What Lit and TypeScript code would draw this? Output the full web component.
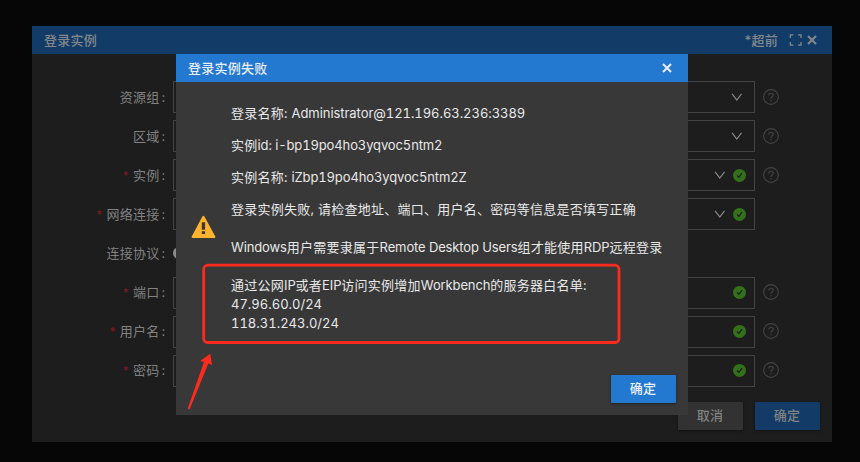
import { LitElement, html, css, svg, nothing } from "lit";
import { customElement } from "lit/decorators.js";

interface Field {
  label: string;
  required?: boolean;
  select?: boolean;
  valid?: boolean;
  help?: boolean;
  radio?: boolean;
  raised?: boolean;
}

const fields: Field[] = [
  { label: "资源组", select: true, help: true },
  { label: "区域", select: true, help: true },
  { label: "实例", required: true, select: true, valid: true, help: true },
  { label: "网络连接", required: true, select: true, valid: true },
  { label: "连接协议", radio: true },
  { label: "端口", required: true, valid: true, help: true, raised: true },
  { label: "用户名", required: true, valid: true, help: true, raised: true },
  { label: "密码", required: true, valid: true, help: true, raised: true },
];

const closeIcon = svg`<path d="M1.7 1.7 L8.3 8.3 M8.3 1.7 L1.7 8.3" fill="none" stroke="currentColor" stroke-width="2" stroke-linecap="square"/>`;

@customElement("app-root")
export class AppRoot extends LitElement {
  static styles = css`
    :host {
      display: block;
      position: relative;
      box-sizing: border-box;
      width: 860px;
      height: 462px;
      padding: 26px 28px 20px 32px;
      overflow: hidden;
      background: #060606;
      font: 13px/19px Inter, "Noto Sans CJK SC", sans-serif;
      letter-spacing: 0.25px;
    }
    svg { display: block; flex: none; }
    .window {
      box-sizing: border-box;
      height: 416px;
      background: #1d1d1d;
      color: #818181;
    }
    .bar {
      box-sizing: border-box;
      height: 28px;
      display: flex;
      align-items: center;
      padding: 0 15px 0 12px;
      background: #123c67;
      color: #85888b;
      font-weight: 500;
    }
    .bar .title { flex: 1; }
    .window .expand { margin: 0 5px 0 11px; }
    .form { padding-top: 27px; }
    .row {
      display: flex;
      align-items: center;
      height: 32px;
      margin-bottom: 7px;
    }
    .row.radio-row { margin-bottom: 8px; }
    .label {
      width: 133.5px;
      margin-right: 7.5px;
      text-align: right;
      white-space: nowrap;
    }
    .colon { margin-left: 2px; }
    .star { color: #7d1a1e; margin-right: 4px; font-size: 12px; }
    .field {
      box-sizing: border-box;
      width: 582px;
      height: 32px;
      border: 1px solid #434343;
      display: flex;
      align-items: center;
      justify-content: flex-end;
      gap: 8px;
      padding-right: 8px;
    }
    .field.plain { padding-right: 12px; }
    .help { margin-left: 8px; }
    .raised .label, .raised .help { margin-bottom: 2px; }
    .raised .field { padding-bottom: 2px; }
    .radio {
      width: 12px;
      height: 12px;
      border-radius: 50%;
      background: #8b8b8b;
    }
    .actions {
      display: flex;
      justify-content: flex-end;
      gap: 12px;
      padding: 8px 12px 0 0;
    }
    .btn {
      box-sizing: border-box;
      width: 65px;
      height: 28px;
      padding-right: 1px;
      line-height: 27px;
      text-align: center;
      font-weight: 500;
      border-radius: 1px;
      box-shadow: 0 1px 3px rgba(0, 0, 0, 0.4);
    }
    .btn.cancel { background: #323232; }
    .btn.dim { background: #123c67; }
    .btn.ok { background: #2378d0; color: #f0f3f6; }
    .dialog {
      position: absolute;
      left: 176px;
      top: 54px;
      width: 512px;
      height: 361px;
      display: flex;
      flex-direction: column;
      background: #383838;
      color: #e8e8e8;
    }
    .dialog .bar { background: #2378d0; color: #e9eef4; padding-right: 16px; }
    .content {
      flex: 1;
      display: flex;
      align-items: flex-start;
      padding: 22px 15px 0;
    }
    .warning { margin-top: 111px; }
    .text { margin-left: 15px; white-space: nowrap; font-variant-numeric: tabular-nums; }
    .text p { margin: 0 0 13px; }
    .text p.wide { margin-bottom: 19px; }
    .text p.last { margin-bottom: 0; }
    .latin { letter-spacing: -0.12px; }
    .account { letter-spacing: -0.05px; }
    .range { letter-spacing: 0; }
    .footer {
      display: flex;
      justify-content: flex-end;
      padding: 0 12px 12px;
    }
    .annotation { position: absolute; left: 184px; top: 260px; }
  `;

  private fieldRow(f: Field) {
    return html`
      <div class="row ${f.radio ? "radio-row" : ""} ${f.raised ? "raised" : ""}">
        <div class="label">${f.required ? html`<span class="star">*</span>` : nothing}${f.label}<span class="colon">:</span></div>
        ${f.radio
          ? html`<div class="radio"></div>`
          : html`<div class="field ${f.valid ? "" : "plain"}">
              ${f.select ? this.chevron() : nothing}
              ${f.valid ? this.check() : nothing}
            </div>`}
        ${f.help ? this.help() : nothing}
      </div>`;
  }

  private chevron() {
    return html`<svg width="11" height="9" viewBox="0 0 11 9"><path d="M1.1 .9 L5.8 7.1 L10.5 .9" fill="none" stroke="#888888" stroke-width="1.2"/></svg>`;
  }

  private check() {
    return html`<svg width="13" height="14" viewBox="0 0 13 14"><circle cx="6.5" cy="7.4" r="6.5" fill="#32701a"/><path d="M4.1 7.5 L5.9 9.3 L9 5.1" fill="none" stroke="#1d1d1d" stroke-width="1.2"/></svg>`;
  }

  private help() {
    return html`<svg class="help" width="16" height="16" viewBox="0 0 16 16" fill="none" stroke="#434343">
      <circle cx="8" cy="8" r="7.4" stroke-width="1.1"/>
      <path d="M5.8 6.4 C5.8 3.5 10.3 3.6 10.2 6.2 C10.2 7.7 8 7.7 8 9.8" stroke-width="1.2"/>
      <circle cx="8" cy="11.7" r=".75" fill="#434343" stroke="none"/>
    </svg>`;
  }

  render() {
    return html`
      <div class="window">
        <div class="bar">
          <span class="title">登录实例</span>
          <span>*超前</span>
          <svg class="expand" width="13" height="12" viewBox="0 0 13 12"><path d="M4.4 .9 H1.4 V3.9 M9 .9 H12 V3.9 M4.4 11.1 H1.4 V8.1 M9 11.1 H12 V8.1" fill="none" stroke="currentColor" stroke-width="1.3"/></svg>
          <svg width="10" height="10" viewBox="0 0 10 10">${closeIcon}</svg>
        </div>
        <div class="form">${fields.map((f) => this.fieldRow(f))}</div>
        <div class="actions">
          <div class="btn cancel">取消</div>
          <div class="btn dim">确定</div>
        </div>
      </div>
      <div class="dialog">
        <div class="bar">
          <span class="title">登录实例失败</span>
          <svg width="10" height="10" viewBox="0 0 10 10">${closeIcon}</svg>
        </div>
        <div class="content">
          <svg class="warning" width="25" height="24" viewBox="0 0 25 24"><path d="M12.4 1.8 L23.4 22 H1.6 Z" fill="#fdb32b" stroke="#fdb32b" stroke-width="2" stroke-linejoin="round"/><path d="M10.8 7.3 H14.1 V14.8 H10.8 Z M10.8 16.2 H14.1 V19.1 H10.8 Z" fill="#383838"/></svg>
          <div class="text">
            <p>登录名称: <span class="account">Administrator@121.196.63.236:3389</span></p>
            <p>实例<span class="latin">id: i-bp19po4ho3yqvoc5ntm2</span></p>
            <p>实例名称: <span class="latin">iZbp19po4ho3yqvoc5ntm2Z</span></p>
            <p class="wide">登录实例失败, 请检查地址、端口、用户名、密码等信息是否填写正确</p>
            <p class="wide"><span class="latin">Windows</span>用户需要隶属于<span class="latin">Remote Desktop Users</span>组才能使用<span class="latin">RDP</span>远程登录</p>
            <p class="last">通过公网<span class="latin">IP</span>或者<span class="latin">EIP</span>访问实例增加<span class="latin">Workbench</span>的服务器白名单:<br /><span class="range">47.96.60.0/24</span><br /><span class="range">118.31.243.0/24</span></p>
          </div>
        </div>
        <div class="footer"><div class="btn ok">确定</div></div>
      </div>
      <svg class="annotation" width="440" height="152" viewBox="0 0 440 152">
        <rect x="19.7" y="5.2" width="415.3" height="77.3" rx="4" fill="none" stroke="#fc2b1d" stroke-width="2.8"/>
        <path d="M26.2 93.8 L16.2 101 L20 102 L3.8 148.2 Q4.3 150.2 6 148.5 L24.3 103.6 L28 105 Z" fill="#fc2b1d"/>
      </svg>`;
  }
}
